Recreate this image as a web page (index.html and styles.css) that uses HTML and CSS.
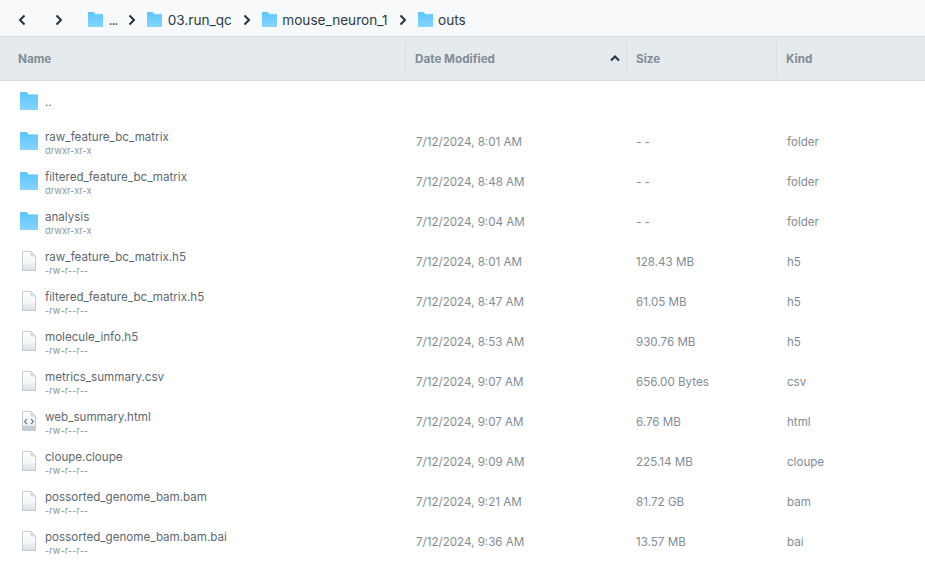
FILE: index.html
```html
<!DOCTYPE html>
<html lang="en">
<head>
    <meta charset="UTF-8">
    <title>outs</title>
    <link rel="stylesheet" href="styles.css">
</head>
<body>
    <svg class="defs" width="0" height="0">
        <defs>
            <linearGradient id="folderFill" x1="0" y1="0" x2="0" y2="1">
                <stop offset="0" stop-color="#5cc5fb"/>
                <stop offset="1" stop-color="#85d5fe"/>
            </linearGradient>
            <linearGradient id="fileFill" x1="0" y1="0" x2="0" y2="1">
                <stop offset="0" stop-color="#ffffff"/>
                <stop offset="0.55" stop-color="#f6f8f9"/>
                <stop offset="1" stop-color="#d6e0e5"/>
            </linearGradient>
            <symbol id="folder" viewBox="0 0 18 18">
                <path d="M0 0h6.5l2.5 2.5H18V18H0Z" fill="url(#folderFill)"/>
                <path d="M8 2h10v1H9Z" fill="#a5e0fe"/>
            </symbol>
            <symbol id="file" viewBox="0 0 14 20">
                <path d="M0.5 0.5H9L13.5 5V19.5H0.5Z" fill="url(#fileFill)" stroke="#c3ced4"/>
                <path d="M9 0.5V5H13.5Z" fill="#dfe6ea" stroke="#ccd6db"/>
            </symbol>
            <symbol id="html" viewBox="0 0 14 20">
                <path d="M0.5 0.5H9L13.5 5V19.5H0.5Z" fill="url(#fileFill)" stroke="#c3ced4"/>
                <path d="M9 0.5V5H13.5Z" fill="#dfe6ea" stroke="#ccd6db"/>
                <path d="M5 8L2.5 10.5L5 13M9 8L11.5 10.5L9 13" fill="none" stroke="#6d808c" stroke-width="1.2"/>
                <rect x="1" y="15" width="12" height="4" fill="#c2ced4"/>
            </symbol>
        </defs>
    </svg>

    <nav class="topbar">
        <svg class="nav-btn" width="8" height="12" viewBox="0 0 8 12"><path d="M6.5 1.5L2 6l4.5 4.5" fill="none" stroke="#26323a" stroke-width="2"/></svg>
        <svg class="nav-btn next" width="8" height="12" viewBox="0 0 8 12"><path d="M1.5 1.5L6 6l-4.5 4.5" fill="none" stroke="#26323a" stroke-width="2"/></svg>
        <div class="crumbs">
            <span class="crumb"><svg class="crumb-icon"><use href="#folder"/></svg><span class="more">...</span></span>
            <svg class="sep" width="8" height="12" viewBox="0 0 8 12"><path d="M1.5 1.5L6 6l-4.5 4.5" fill="none" stroke="#26323a" stroke-width="2"/></svg>
            <span class="crumb"><svg class="crumb-icon"><use href="#folder"/></svg>03.run_qc</span>
            <svg class="sep" width="8" height="12" viewBox="0 0 8 12"><path d="M1.5 1.5L6 6l-4.5 4.5" fill="none" stroke="#26323a" stroke-width="2"/></svg>
            <span class="crumb"><svg class="crumb-icon"><use href="#folder"/></svg>mouse_neuron_1</span>
            <svg class="sep" width="8" height="12" viewBox="0 0 8 12"><path d="M1.5 1.5L6 6l-4.5 4.5" fill="none" stroke="#26323a" stroke-width="2"/></svg>
            <span class="crumb"><svg class="crumb-icon"><use href="#folder"/></svg>outs</span>
        </div>
    </nav>

    <div class="head row-grid">
        <div class="th first">Name</div>
        <div class="th">Date Modified
            <svg class="sort" width="10" height="7" viewBox="0 0 10 7"><path d="M1 5.5L5 1.5l4 4" fill="none" stroke="#1f3442" stroke-width="2"/></svg>
        </div>
        <div class="th">Size</div>
        <div class="th">Kind</div>
    </div>

    <div class="list">
        <div class="row row-grid">
            <div class="name"><svg class="icon-folder"><use href="#folder"/></svg><div class="label up">..</div></div>
        </div>
        <div class="row row-grid">
            <div class="name"><svg class="icon-folder"><use href="#folder"/></svg><div class="info"><div class="label">raw_feature_bc_matrix</div><div class="perm">drwxr-xr-x</div></div></div>
            <div class="cell">7/12/2024, 8:01 AM</div><div class="cell">- -</div><div class="cell">folder</div>
        </div>
        <div class="row row-grid">
            <div class="name"><svg class="icon-folder"><use href="#folder"/></svg><div class="info"><div class="label">filtered_feature_bc_matrix</div><div class="perm">drwxr-xr-x</div></div></div>
            <div class="cell">7/12/2024, 8:48 AM</div><div class="cell">- -</div><div class="cell">folder</div>
        </div>
        <div class="row row-grid">
            <div class="name"><svg class="icon-folder"><use href="#folder"/></svg><div class="info"><div class="label">analysis</div><div class="perm">drwxr-xr-x</div></div></div>
            <div class="cell">7/12/2024, 9:04 AM</div><div class="cell">- -</div><div class="cell">folder</div>
        </div>
        <div class="row row-grid">
            <div class="name"><svg class="icon-file"><use href="#file"/></svg><div class="info"><div class="label">raw_feature_bc_matrix.h5</div><div class="perm">-rw-r--r--</div></div></div>
            <div class="cell">7/12/2024, 8:01 AM</div><div class="cell">128.43 MB</div><div class="cell">h5</div>
        </div>
        <div class="row row-grid">
            <div class="name"><svg class="icon-file"><use href="#file"/></svg><div class="info"><div class="label">filtered_feature_bc_matrix.h5</div><div class="perm">-rw-r--r--</div></div></div>
            <div class="cell">7/12/2024, 8:47 AM</div><div class="cell">61.05 MB</div><div class="cell">h5</div>
        </div>
        <div class="row row-grid">
            <div class="name"><svg class="icon-file"><use href="#file"/></svg><div class="info"><div class="label">molecule_info.h5</div><div class="perm">-rw-r--r--</div></div></div>
            <div class="cell">7/12/2024, 8:53 AM</div><div class="cell">930.76 MB</div><div class="cell">h5</div>
        </div>
        <div class="row row-grid">
            <div class="name"><svg class="icon-file"><use href="#file"/></svg><div class="info"><div class="label">metrics_summary.csv</div><div class="perm">-rw-r--r--</div></div></div>
            <div class="cell">7/12/2024, 9:07 AM</div><div class="cell">656.00 Bytes</div><div class="cell">csv</div>
        </div>
        <div class="row row-grid">
            <div class="name"><svg class="icon-file"><use href="#html"/></svg><div class="info"><div class="label">web_summary.html</div><div class="perm">-rw-r--r--</div></div></div>
            <div class="cell">7/12/2024, 9:07 AM</div><div class="cell">6.76 MB</div><div class="cell">html</div>
        </div>
        <div class="row row-grid">
            <div class="name"><svg class="icon-file"><use href="#file"/></svg><div class="info"><div class="label">cloupe.cloupe</div><div class="perm">-rw-r--r--</div></div></div>
            <div class="cell">7/12/2024, 9:09 AM</div><div class="cell">225.14 MB</div><div class="cell">cloupe</div>
        </div>
        <div class="row row-grid">
            <div class="name"><svg class="icon-file"><use href="#file"/></svg><div class="info"><div class="label">possorted_genome_bam.bam</div><div class="perm">-rw-r--r--</div></div></div>
            <div class="cell">7/12/2024, 9:21 AM</div><div class="cell">81.72 GB</div><div class="cell">bam</div>
        </div>
        <div class="row row-grid">
            <div class="name"><svg class="icon-file"><use href="#file"/></svg><div class="info"><div class="label">possorted_genome_bam.bam.bai</div><div class="perm">-rw-r--r--</div></div></div>
            <div class="cell">7/12/2024, 9:36 AM</div><div class="cell">13.57 MB</div><div class="cell">bai</div>
        </div>
    </div>
</body>
</html>
```
FILE: styles.css
```css
body {
    margin: 0;
    height: 576px;
    overflow: hidden;
    background-color: white;
    font-family: Inter, sans-serif;
}
.defs {
    display: block;
    height: 0;
}
.topbar {
    height: 33px;
    display: flex;
    align-items: center;
    padding: 3px 0 0 18px;
    background-color: #f7f9fa;
    border-bottom: 1px solid #d5dfe3;
}
.nav-btn.next {
    margin-left: 29px;
}
.crumbs {
    display: flex;
    align-items: center;
    margin-left: 25px;
    font-size: 13.6px;
    color: #2b3a44;
}
.crumb {
    display: flex;
    align-items: center;
    gap: 5.5px;
}
.crumb-icon {
    width: 15px;
    height: 15px;
}
.more {
    letter-spacing: -1px;
}
.sep {
    margin: 0 11px;
}
.row-grid {
    display: grid;
    grid-template-columns: 405px 221px 150px 1fr;
}
.head {
    height: 43px;
    background-color: #e5eaec;
    border-bottom: 1px solid #d5dfe3;
    align-items: center;
}
.th {
    height: 35px;
    display: flex;
    align-items: center;
    justify-content: space-between;
    padding: 0 6px 0 9px;
    border-left: 1px solid #d8e0e3;
    font-size: 11.7px;
    font-weight: 700;
    color: #7f8d96;
}
.th.first {
    border-left: none;
    padding-left: 18px;
}
.row {
    height: 40px;
    align-items: center;
}
.name {
    display: flex;
    align-items: center;
}
.icon-folder {
    width: 18px;
    height: 18px;
    margin: 0 7px 0 20px;
}
.icon-file {
    width: 14px;
    height: 20px;
    margin: 0 9px 0 22px;
}
.info {
    padding-top: 6px;
}
.label {
    font-size: 11.6px;
    line-height: 12px;
    padding-bottom: 2px;
    color: #5c6870;
}
.label.up {
    padding-top: 4px;
}
.perm {
    font-size: 9.3px;
    line-height: 12px;
    color: #8b979e;
}
.cell {
    padding: 1px 0 0 11px;
    font-size: 11.6px;
    color: #7f8d96;
}
.cell:nth-child(3) {
    padding-left: 10px;
}
```
